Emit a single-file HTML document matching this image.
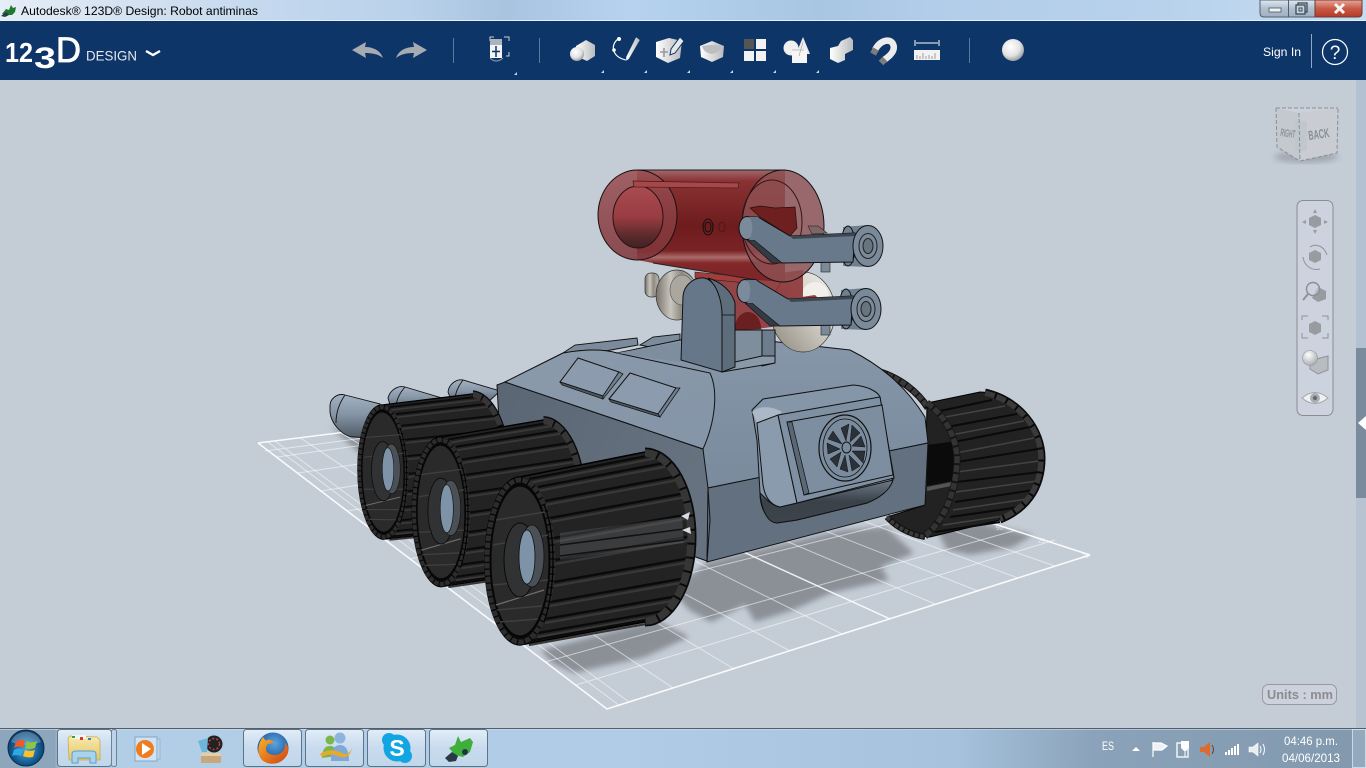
<!DOCTYPE html>
<html><head><meta charset="utf-8"><title>Autodesk 123D Design</title>
<style>html,body{margin:0;padding:0;background:#c4ccd6;overflow:hidden}svg{display:block}text{font-family:"Liberation Sans",sans-serif}</style></head>
<body>
<svg width="1366" height="768" viewBox="0 0 1366 768" xmlns="http://www.w3.org/2000/svg">
<defs>
<linearGradient id="tb" x1="0" x2="1" y1="0" y2="0"><stop offset="0" stop-color="#e6eef7"/><stop offset=".08" stop-color="#d6e3f1"/><stop offset=".2" stop-color="#c3d8ee"/><stop offset=".3" stop-color="#b9d1ea"/><stop offset=".37" stop-color="#a9c4e0"/><stop offset=".46" stop-color="#b6d2ee"/><stop offset=".6" stop-color="#a8c5e1"/><stop offset=".68" stop-color="#b2cde9"/><stop offset=".85" stop-color="#b8d2ec"/><stop offset="1" stop-color="#c6dcf1"/></linearGradient>
<linearGradient id="task" x1="0" x2="1" y1="0" y2="0"><stop offset="0" stop-color="#8ea6bc"/><stop offset=".04" stop-color="#8ea6bc"/><stop offset=".045" stop-color="#b2cde6"/><stop offset=".45" stop-color="#b0cce6"/><stop offset=".7" stop-color="#a6c2dc"/><stop offset=".8" stop-color="#8ba3ba"/><stop offset="1" stop-color="#8198ad"/></linearGradient>
<linearGradient id="btn" x1="0" x2="0" y1="0" y2="1"><stop offset="0" stop-color="#e2edf7"/><stop offset=".5" stop-color="#c8dbee"/><stop offset="1" stop-color="#c2d6ea"/></linearGradient>
<linearGradient id="ig" x1="0" x2="0" y1="0" y2="1"><stop offset="0" stop-color="#fff"/><stop offset="1" stop-color="#c2c4c6"/></linearGradient>
<linearGradient id="ig2" x1="0" x2="1" y1="0" y2="0"><stop offset="0" stop-color="#fff"/><stop offset="1" stop-color="#b8babc"/></linearGradient>
<radialGradient id="sph" cx=".4" cy=".35" r=".7"><stop offset="0" stop-color="#fff"/><stop offset=".6" stop-color="#e2e2e2"/><stop offset="1" stop-color="#8e9296"/></radialGradient>
<radialGradient id="sph2" cx=".4" cy=".3" r=".75"><stop offset="0" stop-color="#fff"/><stop offset="1" stop-color="#a4a8ac"/></radialGradient>
<linearGradient id="x" x1="0" x2="0" y1="0" y2="1"><stop offset="0" stop-color="#e9a79c"/><stop offset=".5" stop-color="#c75a45"/><stop offset="1" stop-color="#b53a27"/></linearGradient>
<linearGradient id="wb" x1="0" x2="0" y1="0" y2="1"><stop offset="0" stop-color="#dfe8f1"/><stop offset=".5" stop-color="#b0bfce"/><stop offset="1" stop-color="#9fb0c2"/></linearGradient>
<linearGradient id="side" x1="0" x2="1" y1="0" y2=".3"><stop offset="0" stop-color="#5a6673"/><stop offset="1" stop-color="#66727f"/></linearGradient>
<linearGradient id="upper" x1="0" x2="0" y1="0" y2="1"><stop offset="0" stop-color="#8797a9"/><stop offset=".5" stop-color="#7f90a2"/><stop offset="1" stop-color="#7a8b9d"/></linearGradient>
<linearGradient id="top" x1="0" x2="1" y1="0" y2="1"><stop offset="0" stop-color="#8b9aab"/><stop offset="1" stop-color="#8495a7"/></linearGradient>
<linearGradient id="redb" x1="0" x2="0" y1="0" y2="1"><stop offset="0" stop-color="#a06a6c"/><stop offset=".1" stop-color="#8a3234"/><stop offset=".5" stop-color="#6e1c1d"/><stop offset=".72" stop-color="#7a2326"/><stop offset=".78" stop-color="#a96c6c"/><stop offset=".83" stop-color="#84282a"/><stop offset="1" stop-color="#7d2527"/></linearGradient>
<linearGradient id="tube" x1="0" x2="0" y1="0" y2="1"><stop offset="0" stop-color="#a84c52"/><stop offset=".5" stop-color="#9a3d42"/><stop offset=".8" stop-color="#5c2a2c"/><stop offset="1" stop-color="#3f2224"/></linearGradient>
<linearGradient id="face" x1="0" x2="0" y1="0" y2="1"><stop offset="0" stop-color="#9a4e52"/><stop offset="1" stop-color="#7e3438"/></linearGradient>
<linearGradient id="silver" x1="0" x2="1" y1="0" y2="0"><stop offset="0" stop-color="#77736b"/><stop offset=".35" stop-color="#c9c6be"/><stop offset=".6" stop-color="#8f8b81"/><stop offset="1" stop-color="#bdbab2"/></linearGradient>
<linearGradient id="silver2" x1="0" x2="1" y1="1" y2="0"><stop offset="0" stop-color="#8c877c"/><stop offset=".55" stop-color="#cfccc5"/><stop offset="1" stop-color="#f2f1ec"/></linearGradient>
<linearGradient id="axle" x1="0" x2="0" y1="0" y2="1"><stop offset="0" stop-color="#a3b2c2"/><stop offset=".45" stop-color="#8595a6"/><stop offset="1" stop-color="#4e5964"/></linearGradient>
<linearGradient id="under" x1="0" x2="0" y1="1" y2="0"><stop offset="0" stop-color="#3d444c"/><stop offset=".5" stop-color="#3a4149"/><stop offset="1" stop-color="#6d7a89"/></linearGradient>
<radialGradient id="orb" cx=".5" cy=".55" r=".55"><stop offset="0" stop-color="#4aa8dc"/><stop offset=".7" stop-color="#12598f"/><stop offset="1" stop-color="#0b3a66"/></radialGradient>
<radialGradient id="ff" cx=".55" cy=".35" r=".6"><stop offset="0" stop-color="#5aa6e0"/><stop offset="1" stop-color="#1b4d96"/></radialGradient>
<linearGradient id="fox" x1="0" x2="1" y1="0" y2="1"><stop offset="0" stop-color="#f7b32b"/><stop offset="1" stop-color="#d3400f"/></linearGradient>
<linearGradient id="fold" x1="0" x2="0" y1="0" y2="1"><stop offset="0" stop-color="#f9e9a8"/><stop offset="1" stop-color="#e3c76d"/></linearGradient>
<filter id="bl"><feGaussianBlur stdDeviation="3"/></filter>
<g id="wheel">
<path d="M520,477 L645,452 A47,85 0 0 1 645,622 L520,645 A35,84 0 0 1 520,477Z" fill="#232323" stroke="#000" stroke-width="1.5"/>
<g stroke="#383838" stroke-width="2.2" fill="none">
<path d="M529,483L657,458M538,491L669,466M545,505L678,480M550,522L686,497M554,542L690,518M555,564L692,540M554,586L690,562M550,606L686,582M545,623L678,600M538,637L669,614M529,645L657,622"/>
</g>
<g stroke="#0a0a0a" stroke-width="2.4" fill="none">
<path d="M529,479L657,454M538,487L669,462M545,501L678,476M550,518L686,493M554,538L690,514M555,560L692,536M554,582L690,558M550,602L686,578M545,619L678,596M538,633L669,610M529,641L657,618"/>
</g>
<path d="M645,452 A47,85 0 0 1 645,622" fill="none" stroke="#0a0a0a" stroke-width="9"/>
<path d="M645,453 A46,84 0 0 1 645,621" fill="none" stroke="#363636" stroke-width="7.5" stroke-dasharray="12 2"/>
<ellipse cx="520" cy="561" rx="35" ry="84" fill="#080808"/>
<ellipse cx="520" cy="561" rx="33" ry="81" fill="none" stroke="#2c2c2c" stroke-width="5" stroke-dasharray="5.5 1.4"/>
<ellipse cx="520" cy="561" rx="29" ry="75" fill="#2a2a2a" stroke="#050505"/>
<path d="M496,520L545,512M493,545L548,535M493,585L548,580M497,610L542,606M500,622L538,619" stroke="#3f3f3f" stroke-width="1.5"/>
<path d="M496,605L544,590" stroke="#6e6e6e" stroke-width="1.3"/>
<path d="M544,505C556,530 556,590 544,622" fill="none" stroke="#000" stroke-width="1.2"/>
<ellipse cx="520" cy="560" rx="16" ry="37" fill="#303234" stroke="#0a0a0a"/>
<ellipse cx="532" cy="556" rx="12" ry="31" fill="#4a5056" stroke="#111" stroke-width=".8"/>
<ellipse cx="527" cy="557" rx="8" ry="27" fill="#7f93a8" stroke="#111" stroke-width=".8"/>
</g>
<g id="arm">
<path d="M843,227 L868,225 L868,267 L843,266 Z" fill="#6f8091"/>
<ellipse cx="848" cy="246" rx="7" ry="20" fill="#6f8091" stroke="#111"/>
<path d="M747,217 L758,217 L790,236 L855,233 L853,262 L782,263 L748,241 Z" fill="#68798c" stroke="#111"/>
<path d="M790,236 L855,233 L855,236 L793,239Z" fill="#3d4751"/>
<path d="M747,240 L772,263 L782,263 L754,240Z" fill="#333b44" stroke="#111" stroke-width=".6"/>
<ellipse cx="747" cy="228" rx="8" ry="11.500" fill="#7b8b9c" stroke="#111"/>
<path d="M749,217 L758,217 C764,222 762,232 756,240 L749,240 C753,233 754,223 749,217Z" fill="#68798c"/>
<ellipse cx="868" cy="246" rx="15" ry="20.500" fill="#7a8a9a" stroke="#111"/>
<ellipse cx="868" cy="246" rx="9" ry="12.500" fill="#7a8a9a" stroke="#222"/>
<ellipse cx="868" cy="246" rx="5" ry="7.500" fill="#68757f" stroke="#222"/>
</g>
</defs>

<!-- background -->
<rect x="0" y="0" width="1366" height="768" fill="#c4ccd6"/>
<rect x="1356" y="80" width="10" height="268" fill="#b4c1d3"/>
<rect x="1356" y="348" width="10" height="150" fill="#7b8b9e"/>
<rect x="1356" y="498" width="10" height="230" fill="#b7c3d1"/>
<path d="M1358,423 L1366,416 L1366,430 Z" fill="#fff"/>

<!-- title bar -->
<rect x="0" y="0" width="1366" height="21" fill="url(#tb)"/>
<rect x="0" y="20" width="1366" height="1" fill="#e8eef5"/>
<path d="M2,14 L6,9 L9,10 L11,5 L13,8 L16,7 L15,12 L12,15 L6,15Z" fill="#1f7a31"/>
<path d="M1,16 L6,12 L9,15 L5,17Z" fill="#2a3c46"/>
<text x="21" y="15" font-size="12" fill="#000" textLength="237" lengthAdjust="spacingAndGlyphs">Autodesk® 123D® Design: Robot antiminas</text>
<!-- window controls -->
<path d="M1260,0 L1315,0 L1315,17 L1264,17 Q1260,17 1260,13 Z" fill="url(#wb)" stroke="#50606e" stroke-width="1"/>
<line x1="1288.500" y1="0" x2="1288.500" y2="17" stroke="#50606e"/>
<path d="M1315,0 L1362,0 L1362,13 Q1362,17 1358,17 L1315,17 Z" fill="url(#x)" stroke="#6a3b32" stroke-width="1"/>
<rect x="1269" y="8" width="12" height="4" fill="#eef2f6" stroke="#4a5560" stroke-width=".8"/>
<rect x="1298" y="3" width="9" height="9" fill="none" stroke="#3e4a56" stroke-width="1.300"/>
<rect x="1296" y="5" width="9" height="9" fill="#c6d2de" stroke="#3e4a56" stroke-width="1.300"/>
<rect x="1299" y="8" width="3" height="3" fill="none" stroke="#3e4a56"/>
<path d="M1335,4 L1344,13 M1344,4 L1335,13" stroke="#f4f4f4" stroke-width="3"/>

<!-- toolbar -->
<rect x="0" y="21" width="1366" height="59" fill="#0e3568"/>
<text x="5" y="62" font-size="28" font-weight="bold" fill="#fff" textLength="28" lengthAdjust="spacingAndGlyphs">12</text>
<text x="34" y="68" font-size="30" font-weight="bold" fill="#fff" textLength="22" lengthAdjust="spacingAndGlyphs">3</text>
<text x="56" y="62" font-size="35" fill="#fff" stroke="#fff" stroke-width=".8" textLength="25" lengthAdjust="spacingAndGlyphs">D</text>
<text x="86" y="60.500" font-size="14" fill="#e4e8ee" textLength="51" lengthAdjust="spacingAndGlyphs">DESIGN</text>
<path d="M146,51 L153,55 L160,51" fill="none" stroke="#fff" stroke-width="2.400"/>
<path d="M352,50 L366,42 L365,47 C375,47 381,52 383,58 C378,54 372,53 365,53 L366,58 Z" fill="#a6abb1"/>
<path d="M427,50 L413,42 L414,47 C404,47 398,52 396,58 C401,54 407,53 414,53 L413,58 Z" fill="#a6abb1"/>
<g stroke="#5e7a99" stroke-width="1"><line x1="453.500" y1="38" x2="453.500" y2="63"/><line x1="539.500" y1="38" x2="539.500" y2="63"/><line x1="969.500" y1="38" x2="969.500" y2="63"/></g>
<path d="M490,41 L490,37 L494,37 M504,37 L509,37 L509,41 M509,52 L509,56 L506,56 M490,52" fill="none" stroke="#c8d0d8" stroke-width="1"/>
<rect x="490" y="39" width="12" height="6" fill="#aab4be"/>
<rect x="490" y="45" width="12" height="13" fill="#f4f4f4"/>
<path d="M496,46 V57 M492,51.500 H500" stroke="#0e3568" stroke-width="1.500"/>
<path d="M490,58 Q496,64 503,58" fill="none" stroke="#8a9cb2"/>
<g fill="#cfd6de"><path d="M517,72 v3 h-3z"/><path d="M604,70 v3 h-3z"/><path d="M647,70 v3 h-3z"/><path d="M690,70 v3 h-3z"/><path d="M733,70 v3 h-3z"/><path d="M776,70 v3 h-3z"/><path d="M819,70 v3 h-3z"/></g>
<!-- primitives -->
<path d="M576,46 L586,40 L595,45 L595,56 L587,61 L576,56Z" fill="url(#ig2)"/>
<circle cx="577" cy="54" r="7" fill="url(#sph)"/>
<!-- sketch -->
<path d="M618,39 C610,45 612,57 626,60" fill="none" stroke="#fff" stroke-width="1.200"/>
<circle cx="619" cy="39" r="2" fill="#fff"/><circle cx="614" cy="50" r="1.800" fill="#fff"/>
<path d="M636,37 L640,40 L629,59 L626,61 L626,57 Z" fill="url(#ig2)" stroke="#0e3568" stroke-width=".4"/>
<!-- construct -->
<path d="M656,42 L669,38 L682,41 L680,58 L668,63 L656,57Z" fill="url(#ig2)"/>
<path d="M664,48 V57 M660,52 H668" stroke="#9a9a9a" stroke-width="1.600"/>
<path d="M680,37 L684,41 L675,53 L670,55 L671,49 Z" fill="#e8e8e8" stroke="#0e3568" stroke-width="1"/>
<!-- modify -->
<path d="M700,46 L712,41 L724,46 L723,57 L712,62 L701,57Z" fill="url(#ig2)"/>
<path d="M702,46 Q712,44 722,46 Q720,53 712,54 Q704,53 702,46Z" fill="#bcbec0"/>
<!-- pattern -->
<rect x="744" y="39" width="10" height="10" fill="#555"/><rect x="756" y="39" width="10" height="10" fill="#f2f2f2"/><rect x="744" y="51" width="10" height="10" fill="#f2f2f2"/><rect x="756" y="51" width="10" height="10" fill="#f2f2f2"/>
<!-- grouping -->
<circle cx="791" cy="48" r="7.500" fill="#f0f0f0"/><path d="M803,37 L810,54 L796,54Z" fill="#ededed"/><rect x="792" y="49" width="15" height="14" fill="#f6f6f6"/>
<path d="M792,50 H804 M803,42 L799,56" fill="none" stroke="#aaa" stroke-width=".7"/>
<!-- combine -->
<path d="M841,41 L850,37 L853,40 L853,50 L845,54 L845,60 L838,63 L830,59 L830,48 L838,46Z" fill="url(#ig2)"/>
<!-- magnet -->
<path d="M875,50 C880,40 890,38 893,44 C896,50 890,56 884,60" fill="none" stroke="#ececec" stroke-width="6.500"/>
<path d="M876,49 L873,54 M885,59 L881,63" stroke="#7c7c7c" stroke-width="6.500"/>
<!-- measure -->
<path d="M915,40 V46 M939,40 V46 M916,43 H938" stroke="#fff" stroke-width="1"/>
<rect x="914" y="50" width="26" height="10" fill="#f2f2f2"/>
<path d="M917,59 V55 M920,59 V56 M923,59 V53 M926,59 V56 M929,59 V55 M932,59 V56 M935,59 V53" stroke="#8a8a8a" stroke-width=".8"/>
<!-- material -->
<circle cx="1013" cy="50" r="11" fill="url(#sph)"/>
<text x="1263" y="56" font-size="12" fill="#fff" textLength="38" lengthAdjust="spacingAndGlyphs">Sign In</text>
<line x1="1311.500" y1="34" x2="1311.500" y2="68" stroke="#8fa8c6"/>
<circle cx="1335" cy="52" r="12.500" fill="none" stroke="#fff" stroke-width="1.200"/>
<text x="1335" y="59" font-size="19" fill="#fff" text-anchor="middle">?</text>

<!-- grid -->
<g filter="url(#bl)" fill="#8b9097">
<path d="M541,650 L656,620 L689,637 L645,657 L574,673 L552,663Z"/>
<path d="M708,562 L744,553 L842,530 L886,527 L914,553 L881,567 L889,580 L831,593 L793,610 L755,622 L745,605 L711,622 L689,610 L672,590Z"/>
<path d="M937,530 L980,523 L1033,535 L1013,547 L970,555 L947,550Z"/>
<path d="M330,425 L372,445 L362,455 L345,440Z"/>
</g>
<g fill="none" stroke="#fff">
<g stroke-opacity=".55" stroke-width="1">
<path d="M673,688L300,437.600M734,669L340,432.400M790,651L378,427.500M842,634L416,422.600M935,604L485,413.700M978,591L517,409.600M1018,578L550,405.400M1055,566L580,401.500"/>
<path d="M545,662L1015,530.500M493,622L949,508.800M449,588L890,489.500M410,559L838,472.400M347,511L747,442.500M321,491L708,429.700M298,473L672,418M277,457L640,407"/>
<path d="M629,702L275,441M576,685L1055,540M620,706L268,442M265,451L615,405"/>
</g>
<g stroke-opacity=".85" stroke-width="1.500"><path d="M890,619L450,418M377,533L790,456.600"/></g>
<g stroke-opacity=".9" stroke-width="1.600"><path d="M258,443L607,709L1090,555M1090,555L610,399M258,443L610,399"/></g>
</g>
<g fill="#fff" fill-opacity=".7" font-size="6"><text x="996" y="530">50</text><text x="1038" y="543">25</text><text x="1082" y="558">75</text></g>

<!-- back axles -->
<g stroke="#111" stroke-width=".9">
<path d="M330,408 C329,398 338,393 345,395 L380,404 L368,438 L355,437 C342,437 329,422 330,408Z" fill="url(#axle)"/>
<path d="M345,395 C338,405 336,415 336,423" fill="none"/>
<path d="M388,398 C390,390 398,385 405,387 L442,398 L420,410 L392,412Z" fill="url(#axle)"/>
<path d="M405,387 C398,395 396,402 396,408" fill="none"/>
<path d="M448,392 C449,384 456,379 463,380 L500,391 L485,405 L452,402Z" fill="url(#axle)"/>
<path d="M463,380 C457,388 455,395 455,400" fill="none"/>
</g>

<!-- right wheels -->
<path d="M880,372 C900,378 918,392 928,408" fill="none" stroke="#111" stroke-width="7"/>
<path d="M880,372 C900,378 918,392 928,408" fill="none" stroke="#3a3a3a" stroke-width="5" stroke-dasharray="6 1.500"/>
<path d="M927,403 L980,392 C1015,392 1042,425 1042,458 C1042,490 1020,510 1000,520 L930,537 C905,535 890,525 887,517 L925,505Z" fill="#222" stroke="#000"/>
<path d="M927,445 L957,441 L957,480 L927,486Z" fill="#0b0b0b"/>
<path d="M927,487 L957,481 L956,485 L927,491Z" fill="#555"/>
<g stroke="#0a0a0a" stroke-width="2"><path d="M935,412L992,400M947,427L1017,414M954,442L1030,427M957,462L1038,449M957,482L1040,472M955,502L1034,490M950,517L1020,507M935,532L1000,522"/></g>
<g stroke="#434343" stroke-width="1.500"><path d="M940,418L1005,406M951,435L1024,421M956,453L1034,438M957,472L1039,461M956,492L1037,481M953,510L1027,499M943,525L1010,515"/></g>
<path d="M985,392 C1020,400 1042,430 1042,458 C1042,490 1025,510 1000,520" fill="none" stroke="#0a0a0a" stroke-width="7"/>
<path d="M985,393 C1020,401 1041,430 1041,458 C1041,490 1024,509 1000,519" fill="none" stroke="#3a3a3a" stroke-width="5.500" stroke-dasharray="10 2"/>
<path d="M927,403 C945,415 958,440 957,462 C956,490 945,520 925,536" fill="none" stroke="#151515" stroke-width="7"/>
<path d="M927,403 C945,415 958,440 957,462 C956,490 945,520 925,536" fill="none" stroke="#333" stroke-width="5.500" stroke-dasharray="7 2"/>
<path d="M887,517 C895,526 908,534 925,537" fill="none" stroke="#111" stroke-width="6"/>
<path d="M887,517 C895,526 908,534 925,537" fill="none" stroke="#3a3a3a" stroke-width="4" stroke-dasharray="4 1.500"/>

<!-- body -->
<path d="M497,385 L505,382 L703,449 L710,490 L707,561 L620,530 L500,440Z" fill="url(#side)" stroke="#111"/>
<path d="M563,353 L575,345 L637,338 L638,345 L600,352Z" fill="#7c8b9b" stroke="#111" stroke-width=".9"/>
<path d="M640,345 L653,337 L680,334 L680,340 L650,347Z" fill="#7c8b9b" stroke="#111" stroke-width=".9"/>
<path d="M505,382 L563,353 Q597,347 617,353 L680,340 L760,340 L850,350 C880,365 905,385 925,417 L928,443 L708,488 L703,449Z" fill="url(#upper)" stroke="#111"/>
<path d="M505,382 L563,353 Q597,347 617,353 L710,373 C718,390 716,420 703,449Z" fill="url(#top)" stroke="#111"/>
<path d="M617,353 L680,342 L680,362Z" fill="#7e8e9f"/>
<path d="M708,488 L928,443 L925,505 L707,562Z" fill="#627080" stroke="#111"/>
<path d="M708,488 L710,520 L707,562" fill="none" stroke="#111"/>
<!-- plates -->
<path d="M560,382 L578,358 L619,372 L603,396Z" fill="#8c9cae" stroke="#111"/>
<path d="M560,382 L603,396 L603,399 L562,385Z" fill="#4d5864" stroke="#111" stroke-width=".7"/>
<path d="M603,396 L619,372 L623,374 L603,399Z" fill="#6f7f8f" stroke="#111" stroke-width=".7"/>
<path d="M609,399 L630,373 L676,388 L658,414Z" fill="#8c9cae" stroke="#111"/>
<path d="M609,399 L658,414 L660,417 L611,402Z" fill="#4d5864" stroke="#111" stroke-width=".7"/>
<path d="M658,414 L676,388 L680,388 L660,417Z" fill="#6f7f8f" stroke="#111" stroke-width=".7"/>
<!-- front module -->
<path d="M752,410 L763,399 L853,385 C868,386 878,392 880,397 L894,478 L867,503 L797,520 L777,523 C768,520 760,510 760,493 L757,440Z" fill="#8596a8" stroke="#111"/>
<path d="M760,493 C762,515 770,523 777,523 L797,520 L867,503 C880,498 890,490 893,480 L797,503 L780,507 C770,505 765,497 760,493Z" fill="url(#under)" stroke="#111"/>
<path d="M752,412 C760,405 772,406 782,412 L778,415 L757,423Z" fill="#aab8c8"/>
<path d="M757,423 L778,415 L797,503 L780,507 C770,505 765,497 763,485Z" fill="#8a9bae" stroke="#111"/>
<path d="M778,415 L880,397 L894,478 L797,503Z" fill="#7f90a2" stroke="#111"/>
<path d="M787,422 L882,405 L893,475 L804,495Z" fill="#7d8ea0" stroke="#111"/>
<path d="M787,422 L792,422 L809,493 L804,495Z" fill="#5a6775" stroke="#111" stroke-width=".7"/>
<ellipse cx="845" cy="448" rx="26" ry="33" fill="#7a8b9d" stroke="#111" stroke-width="1.200"/>
<ellipse cx="845" cy="448" rx="22" ry="29" fill="none" stroke="#111" stroke-width=".8"/>
<g fill="#2b3138" stroke="#111" stroke-width=".5">
<path d="M841,428 L849,424 L846,441Z"/><path d="M852,425 L860,433 L850,442Z"/><path d="M861,436 L865,447 L852,446Z"/><path d="M865,451 L863,463 L852,451Z"/><path d="M860,466 L852,471 L849,455Z"/><path d="M848,472 L840,469 L845,455Z"/><path d="M837,467 L830,459 L841,452Z"/><path d="M828,454 L827,443 L840,449Z"/><path d="M828,439 L833,431 L842,444Z"/>
</g>
<ellipse cx="846.500" cy="447.500" rx="4.500" ry="5.500" fill="#7a8b9d" stroke="#111"/>

<!-- silver disks -->
<rect x="645" y="273" width="14" height="24" rx="6" fill="url(#silver)" stroke="#333" stroke-width=".7"/>
<ellipse cx="677" cy="295" rx="21" ry="25" fill="url(#silver)" stroke="#333" stroke-width=".7"/>
<ellipse cx="682" cy="290" rx="12" ry="15" fill="#aaa79f" stroke="#555" stroke-width=".6"/>
<ellipse cx="803" cy="312" rx="32" ry="40" fill="url(#silver2)" stroke="#333" stroke-width=".7"/>
<ellipse cx="815" cy="297" rx="14" ry="15" fill="#f0efe9"/>
<!-- red assembly -->
<path d="M695,272 L748,277 L803,270 L803,323 L748,330 L737,343 L730,300Z" fill="#8a2c2e" fill-opacity=".85"/>
<ellipse cx="748" cy="328" rx="13" ry="16" fill="#6a2020"/>
<path d="M695,272 L748,277 L747,283 L695,278Z" fill="#a53c3c" stroke="#222" stroke-width=".6"/>
<path d="M637,170 L785,170 L785,282 L757,280 L653,263 L637,260Z" fill="url(#redb)"/>
<path d="M637,170 L785,170 M653,263 L757,280" stroke="#222" fill="none"/>
<ellipse cx="637.500" cy="215" rx="39.500" ry="45" fill="url(#face)" fill-opacity=".85" stroke="#1a1010"/>
<ellipse cx="638" cy="217" rx="25" ry="31" fill="url(#tube)" stroke="#2a1010"/>
<path d="M633,181 L739,183 L738,188 L634,187Z" fill="#a5484a" stroke="#5a1a1a" stroke-width=".8"/>
<ellipse cx="708" cy="227" rx="5" ry="8" fill="none" stroke="#111"/><ellipse cx="708" cy="227" rx="3" ry="5" fill="none" stroke="#111"/>
<ellipse cx="722" cy="227" rx="3" ry="5" fill="none" stroke="#4a1515" stroke-width=".8"/>
<ellipse cx="783" cy="226" rx="41" ry="56" fill="#8f5254" fill-opacity=".82" stroke="#111"/>
<ellipse cx="772" cy="222" rx="30" ry="42" fill="none" stroke="#3a1515"/>
<path d="M750,208 L760,206 L775,208 L795,207 L797,228 L790,236 L760,217Z" fill="#6e1f20" stroke="#2a0d0d" stroke-width=".7"/>
<path d="M808,226 L818,226 L827,233 L812,234Z" fill="#7f6468" stroke="#333" stroke-width=".7"/>
<rect x="821" y="262" width="9" height="10" fill="#7a8a9a" stroke="#222" stroke-width=".6"/>
<rect x="821" y="325" width="9" height="10" fill="#7a8a9a" stroke="#222" stroke-width=".6"/>
<path d="M782,300 L815,295 L818,298 L782,303Z" fill="#9a3c3c"/>
<!-- bracket -->
<path d="M735,330 L762,329 L762,360 L735,367Z" fill="#7f8e9d"/>
<path d="M762,330 L775,330 L775,363 L762,366Z" fill="#6e7d8d" stroke="#111"/>
<path d="M735,330 L762,330" stroke="#111"/>
<path d="M722,372 L775,363 L775,356 L762,356 L735,362 L722,366Z" fill="#8a99a8" stroke="#111"/>
<path d="M708,278 C722,282 732,292 735,303 L735,367 L722,372 L722,315 C721,300 716,285 708,278Z" fill="#5e6d7c" stroke="#111"/>
<path d="M681,360 L683,296 C684,285 694,277 704,278 C716,280 722,300 722,315 L722,372Z" fill="#67778a" stroke="#111"/>
<path d="M722,315 L735,315" stroke="#111" stroke-width=".8"/>
<!-- arms -->
<use href="#arm"/>
<use href="#arm" transform="translate(-2,63)"/>

<!-- left wheels -->
<use href="#wheel" transform="matrix(.72,.072,0,.8,8.600,-14.200)"/>
<use href="#wheel" transform="matrix(.82,.04,0,.89,14.600,-8.100)"/>
<use href="#wheel"/>
<path d="M560,533 L682,517 L684,543 L560,560Z" fill="#6a6e70" fill-opacity=".35"/>
<path d="M560,545 L684,529 M560,556 L684,540" stroke="#111" stroke-width="1.500"/>
<path d="M690,512 L681,516 L688,520Z M690,527 L682,530 L691,534Z" fill="#d6dbe2"/>

<!-- view cube -->
<ellipse cx="1306" cy="157" rx="32" ry="6" fill="#8a9199" opacity=".6" filter="url(#bl)"/>
<path d="M1276,108 L1299,113 L1338,108Z" fill="#ccd2da"/>
<path d="M1276,108 L1299,113 L1300,161 L1277,147Z" fill="#c4c9cf"/>
<path d="M1299,113 L1338,108 L1337,153 L1300,161Z" fill="#c9cdd3"/>
<rect x="1295" y="121" width="12" height="30" fill="#bcc4cd" opacity=".7"/>
<g fill="none" stroke="#8a8f95" stroke-width="1" stroke-dasharray="4 2"><path d="M1276,108 L1338,108"/><path d="M1276,108 L1277,147 L1300,161 L1337,153 L1338,108"/><path d="M1299,113 L1300,161"/></g>
<text x="1280" y="136" font-size="11" font-weight="bold" fill="#8d9299" transform="rotate(8 1280 136)" textLength="15" lengthAdjust="spacingAndGlyphs">RIGHT</text>
<text x="1309" y="140" font-size="13" font-weight="bold" fill="#878d95" transform="rotate(-8 1309 140)" textLength="21" lengthAdjust="spacingAndGlyphs">BACK</text>

<!-- nav panel -->
<rect x="1297" y="200.500" width="36" height="215" rx="6" fill="#ccd3de" stroke="#8a8e92" stroke-width="1"/>
<g fill="#989ca1">
<path d="M1315,215 L1321,218 L1321,225 L1315,228 L1309,225 L1309,218Z"/><path d="M1315,209 L1313,213 H1317Z M1315,234 L1313,230 H1317Z M1302,222 L1306,220 V224Z M1328,222 L1324,220 V224Z"/>
<path d="M1315,250 L1321,253 L1321,260 L1315,263 L1309,260 L1309,253Z"/>
<path d="M1315,321 L1321,324 L1321,332 L1315,335 L1309,332 L1309,324Z"/>
<path d="M1318,287 L1326,291 L1326,299 L1318,302 L1312,298Z"/>
</g>
<g fill="none" stroke="#8f9398" stroke-width="1">
<path d="M1310,247 C1316,243 1324,246 1327,255"/><path d="M1303,257 C1304,266 1312,271 1320,269"/>
<circle cx="1313" cy="289" r="6.500" stroke="#8a8e92" stroke-width="1.400" fill="#ccd3de" fill-opacity=".5"/><path d="M1308,294 L1303,300" stroke-width="2"/>
<path d="M1302,320 V316 H1308 M1322,316 H1328 V320 M1328,333 V338 H1322 M1308,338 H1302 V333"/>
</g>
<path d="M1320,358 L1328,356 L1328,370 L1318,374 L1310,369 L1310,362Z" fill="#b8bcc0" stroke="#8f9398"/>
<circle cx="1310" cy="358" r="7.500" fill="url(#sph2)" stroke="#8f9398" stroke-width=".6"/>
<path d="M1302,398 Q1315,387 1328,398 Q1315,409 1302,398Z" fill="#eef0f2" stroke="#a2a6aa"/>
<circle cx="1315" cy="398" r="5" fill="#aaaeb3"/><circle cx="1315" cy="398" r="2.200" fill="#686c70"/>

<!-- units -->
<rect x="1262.500" y="684.500" width="74" height="20" rx="6" fill="#cdd1dd" stroke="#9a9a9e" stroke-width="1"/>
<text x="1267" y="699" font-size="13" font-weight="bold" fill="#8c8c8c" textLength="66" lengthAdjust="spacingAndGlyphs">Units : mm</text>

<!-- taskbar -->
<rect x="0" y="728" width="1366" height="40" fill="url(#task)"/>
<rect x="0" y="728" width="1366" height="1" fill="#4e5f70"/>
<rect x="0" y="729" width="1366" height="1" fill="#cfdcea" opacity=".6"/>
<circle cx="26" cy="748" r="18" fill="url(#orb)" stroke="#0a2d4c"/>
<path d="M11,742 A16,16 0 0 1 41,742 Q26,748 11,742Z" fill="#fff" opacity=".25"/>
<path d="M16,742 Q20,738 25,741 L23,748 Q18,745 14,748Z" fill="#f0592a"/><path d="M27,741 Q31,744 37,741 L35,748 Q29,750 25,748Z" fill="#8ec63f"/><path d="M14,750 Q18,747 23,750 L21,756 Q16,754 12,756Z" fill="#2fa8e8"/><path d="M25,750 Q29,752 35,750 L33,757 Q27,758 23,756Z" fill="#fdc12b"/>
<g fill="url(#btn)" stroke="#5f7386" stroke-width="1">
<rect x="57.500" y="729.500" width="54" height="37" rx="3"/>
<rect x="243.500" y="729.500" width="58" height="37" rx="3"/>
<rect x="305.500" y="729.500" width="58" height="37" rx="3"/>
<rect x="367.500" y="729.500" width="58" height="37" rx="3"/>
<rect x="429.500" y="729.500" width="58" height="37" rx="3"/>
</g>
<rect x="111.500" y="729.500" width="5" height="37" rx="2" fill="#bed3e8" stroke="#6d8297"/>
<!-- explorer -->
<path d="M68,738 L70,736 L97,737 L100,740 L100,760 L69,760Z" fill="url(#fold)" stroke="#c9ab52" stroke-width=".8"/>
<rect x="72" y="735" width="14" height="4" fill="#f4f4f4"/><rect x="72" y="736" width="3" height="2" fill="#2fa83a"/><rect x="80" y="737" width="3" height="3" fill="#d6382c"/><rect x="88" y="738" width="3" height="2" fill="#2f7fd0"/>
<path d="M72,763 V754 Q72,751 76,751 H92 Q96,751 96,754 V763 H90 V758 H78 V763Z" fill="#a9d2ec" stroke="#5a9fca"/>
<!-- media player -->
<rect x="135" y="737" width="22" height="24" fill="#cfe3f4" stroke="#7fa8c8"/><rect x="157" y="739" width="3" height="20" fill="#bcd3e8" stroke="#7fa8c8" stroke-width=".6"/>
<circle cx="145" cy="749" r="9" fill="#ef7d1f"/><path d="M142,743 L151,749 L142,755Z" fill="#fff"/>
<!-- box app -->
<path d="M201,753 H221 V763 H201Z" fill="#c7a77c"/><rect x="201" y="753" width="20" height="3" fill="#e6cda4"/>
<circle cx="214" cy="744" r="8.500" fill="#222"/><circle cx="214" cy="744" r="5.500" fill="none" stroke="#b44" stroke-width="1.500" stroke-dasharray="2 2"/>
<path d="M198,741 L208,738 L207,752 L202,752Z" fill="#6fb6dc"/>
<!-- firefox -->
<circle cx="273" cy="748" r="15.500" fill="url(#ff)"/>
<path d="M263,737 C256,746 257,758 265,762 C272,766 284,763 288,753 C289,748 287,744 285,743 C286,750 281,755 275,755 C268,755 264,751 267,745 C269,743 272,744 274,742 C271,739 267,739 266,741Z" fill="url(#fox)"/>
<!-- messenger -->
<circle cx="330" cy="740" r="4.500" fill="#7ab648"/><path d="M322,758 Q322,746 330,746 Q337,746 337,756Z" fill="#7ab648"/>
<circle cx="340" cy="738" r="5.500" fill="#8cb4dc"/><path d="M331,761 Q331,745 340,745 Q349,745 349,761Z" fill="#7fa9d4"/>
<path d="M320,754 Q330,747 342,753 Q348,757 352,748 Q350,759 340,757 Q330,752 322,757Z" fill="#e8a92d"/>
<!-- skype -->
<circle cx="397" cy="748" r="13.500" fill="#12a5e4"/><circle cx="389" cy="740" r="7" fill="#12a5e4"/><circle cx="405" cy="756" r="7" fill="#12a5e4"/>
<text x="397" y="756" font-size="23" font-weight="bold" fill="#fff" text-anchor="middle">S</text>
<!-- app -->
<path d="M449,748 L455,745 L458,736 L461,742 L470,738 L473,742 L470,752 L463,757 L455,755Z" fill="#3fae3a"/>
<path d="M445,758 L452,752 L458,756 L456,761 L449,762Z" fill="#2a3a44"/><circle cx="465" cy="752" r="3" fill="#1f3440"/>
<!-- tray -->
<text x="1102" y="750" font-size="11.500" fill="#fff" textLength="12" lengthAdjust="spacingAndGlyphs">ES</text>
<path d="M1132,751 L1136,747 L1140,751Z" fill="#fff"/>
<path d="M1153,742 V757 M1153,743 H1161 L1167,746 L1162,750 H1153" fill="#eef2f6" stroke="#fff" stroke-width="1.200"/>
<rect x="1177" y="743" width="11" height="14" fill="none" stroke="#fff" stroke-width="1.300"/><path d="M1181,741 H1189 V748 L1185,752 L1181,748Z" fill="#fff"/><path d="M1185,752 V757" stroke="#fff"/>
<path d="M1200,747 H1204 L1210,742 V757 L1204,752 H1200Z" fill="#dd6b30"/><path d="M1212,745 Q1215,749.500 1212,754" fill="none" stroke="#7a3a22"/>
<g fill="#fff"><rect x="1225" y="752" width="2" height="3"/><rect x="1228" y="750" width="2" height="5"/><rect x="1231" y="748" width="2" height="7"/><rect x="1234" y="746" width="2" height="9"/><rect x="1237" y="744" width="2" height="11"/></g>
<path d="M1249,747 H1253 L1258,743 V756 L1253,752 H1249Z" fill="#e8edf2" stroke="#fff" stroke-width=".6"/><path d="M1260,746 Q1262,749.500 1260,753 M1263,744 Q1266,749.500 1263,755" fill="none" stroke="#fff"/>
<text x="1284" y="745" font-size="12" fill="#fff" textLength="54" lengthAdjust="spacingAndGlyphs">04:46 p.m.</text>
<text x="1282" y="762" font-size="12" fill="#fff" textLength="58" lengthAdjust="spacingAndGlyphs">04/06/2013</text>
<rect x="1352.500" y="729.500" width="13" height="38" fill="#a5bacd" fill-opacity=".5" stroke="#dce6ef" stroke-opacity=".8"/>
</svg>
</body></html>
